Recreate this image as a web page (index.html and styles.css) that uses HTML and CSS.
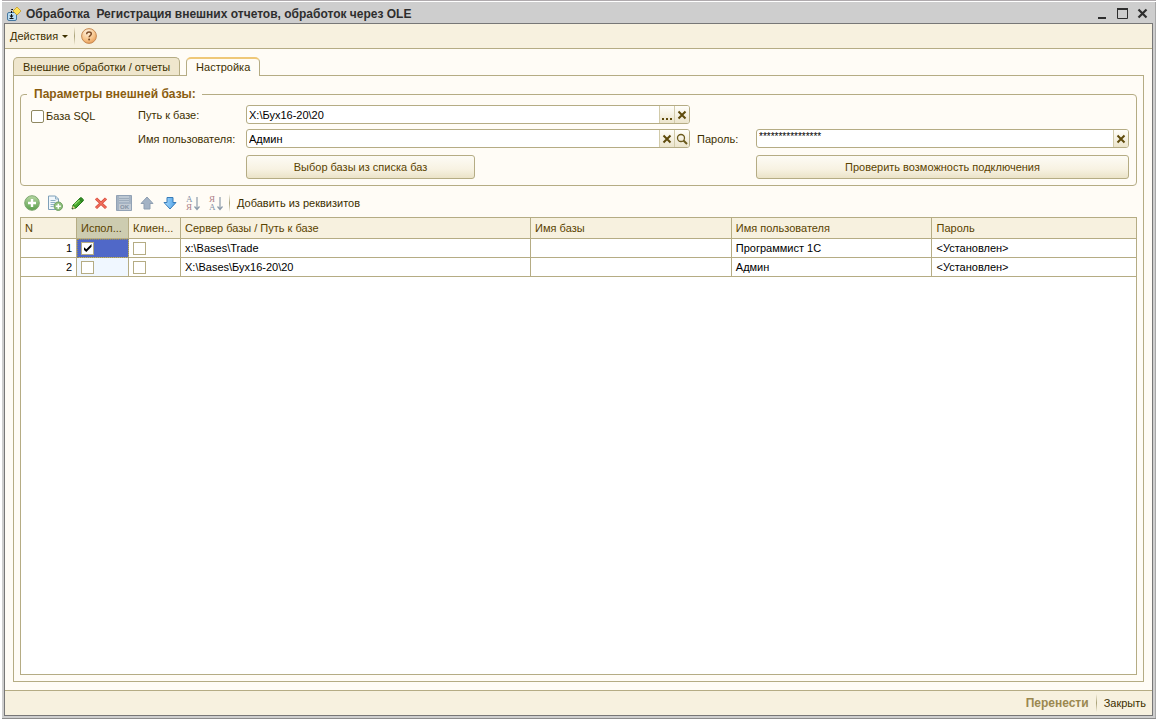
FILE: index.html
```html
<!DOCTYPE html>
<html lang="ru">
<head>
<meta charset="utf-8">
<title>Обработка Регистрация внешних отчетов, обработок через OLE</title>
<link rel="stylesheet" href="styles.css">
</head>
<body>
<div class="window">
  <header class="titlebar">
    <svg class="app-icon" width="16" height="16" viewBox="0 0 16 16" aria-hidden="true"><rect x="1.500" y="6.500" width="9" height="8" rx="1.500" fill="#b9dcf2" stroke="#46779f"/><path d="M11 1l4 4-4 4-4-4z" fill="#ffe35a" stroke="#c59a28" stroke-width=".8"/><path d="M7 3.500H5.500V11" fill="none" stroke="#111" stroke-dasharray="2 1"/><path d="M3.500 9.500h4L5.500 12z" fill="#111"/><path d="M3.500 12.500h4" stroke="#111"/></svg>
    <h1 class="title">Обработка&nbsp; Регистрация внешних отчетов, обработок через OLE</h1>
    <div class="window-buttons">
      <button class="win-btn" aria-label="Свернуть"><svg width="12" height="12" viewBox="0 0 12 12"><path d="M1 10h8" stroke="#2e2e2e" stroke-width="2"/></svg></button>
      <button class="win-btn" aria-label="Развернуть"><svg width="12" height="12" viewBox="0 0 12 12"><path d="M.5.500h10v10H.5z" fill="none" stroke="#2e2e2e"/><path d="M0 1h11" stroke="#2e2e2e" stroke-width="2"/></svg></button>
      <button class="win-btn" aria-label="Закрыть окно"><svg width="12" height="12" viewBox="0 0 12 12"><path d="M1.500 1.500l8 8M9.500 1.500l-8 8" stroke="#2e2e2e" stroke-width="2.200"/></svg></button>
    </div>
  </header>
  <main class="client">
    <nav class="menubar">
      <button class="menu-btn">Действия <span class="caret"></span></button>
      <span class="divider"></span>
      <button class="icon-btn" aria-label="Справка"><svg width="16" height="16" viewBox="0 0 16 16"><defs><radialGradient id="help" cx=".4" cy=".25" r=".8"><stop offset="0" stop-color="#fff3df"/><stop offset=".6" stop-color="#f7c68d"/><stop offset="1" stop-color="#e89a52"/></radialGradient></defs><circle cx="8" cy="8" r="7.400" fill="url(#help)" stroke="#c58a55"/><path d="M5.700 6.200c0-3.200 4.800-2.900 4.600-.2-.1 1.600-2.200 1.500-2.200 3.300" fill="none" stroke="#7b4a25" stroke-width="1.500"/><circle cx="8.100" cy="11.500" r="1" fill="#7b4a25"/></svg></button>
    </nav>
    <div class="content">
      <div class="tabs" role="tablist">
        <button class="tab" role="tab" aria-selected="false">Внешние обработки / отчеты</button>
        <button class="tab tab-active" role="tab" aria-selected="true">Настройка</button>
      </div>
      <section class="panel" role="tabpanel">
        <fieldset class="params">
          <legend>Параметры внешней базы:</legend>
          <label class="check-label"><input class="check check-round" type="checkbox">База SQL</label>
          <label for="path">Путь к базе:</label>
          <div class="field field-wide">
            <input id="path" class="field-input" type="text" value="X:\Бух16-20\20">
            <button class="field-btn" aria-label="Выбрать"><svg width="12" height="12" viewBox="0 0 12 12"><path d="M1 9h2v2H1zM5 9h2v2H5zM9 9h2v2H9z" fill="#5f4b0c"/></svg></button>
            <button class="field-btn" aria-label="Очистить"><svg width="10" height="10" viewBox="0 0 10 10"><path d="M1.500 1.500l7 7M8.500 1.500l-7 7" stroke="#5f4b0c" stroke-width="2"/></svg></button>
          </div>
          <label class="row2 col2" for="user">Имя пользователя:</label>
          <div class="field field-wide row2">
            <input id="user" class="field-input" type="text" value="Админ">
            <button class="field-btn" aria-label="Очистить"><svg width="10" height="10" viewBox="0 0 10 10"><path d="M1.500 1.500l7 7M8.500 1.500l-7 7" stroke="#5f4b0c" stroke-width="2"/></svg></button>
            <button class="field-btn" aria-label="Найти"><svg width="12" height="12" viewBox="0 0 12 12"><circle cx="5" cy="5" r="3.500" fill="none" stroke="#6b5a1c" stroke-width="1.300"/><path d="M7.500 7.500L11 11" stroke="#6b5a1c" stroke-width="2"/></svg></button>
          </div>
          <label class="row2 pass-label" for="pass">Пароль:</label>
          <div class="field field-pass row2">
            <input id="pass" class="field-input field-mask" type="text" value="****************">
            <button class="field-btn" aria-label="Очистить"><svg width="10" height="10" viewBox="0 0 10 10"><path d="M1.500 1.500l7 7M8.500 1.500l-7 7" stroke="#5f4b0c" stroke-width="2"/></svg></button>
          </div>
          <button class="push push-choose">Выбор базы из списка баз</button>
          <button class="push push-test">Проверить возможность подключения</button>
        </fieldset>

        <div class="toolbar">
          <button class="icon-btn" aria-label="Добавить"><svg width="16" height="16" viewBox="0 0 16 16"><defs><linearGradient id="green" x2="0" y2="1"><stop offset="0" stop-color="#b7d8a4"/><stop offset="1" stop-color="#5b9f4d"/></linearGradient></defs><circle cx="8" cy="8" r="7.300" fill="url(#green)" stroke="#7da770"/><path d="M8 4v8M4 8h8" stroke="#fff" stroke-width="2.400"/></svg></button>
          <button class="icon-btn" aria-label="Скопировать"><svg width="16" height="16" viewBox="0 0 16 16"><path d="M1.500 1h7l3 3v10.500h-10z" fill="#f1f7fb" stroke="#7fa0b8"/><path d="M8.500 1v3h3M3.500 5.500h5M3.500 7.500h5M3.500 9.500h4M3.500 11.500h3" fill="none" stroke="#8fb0c6"/><circle cx="11.300" cy="11.200" r="4.200" fill="#8fc07e" stroke="#6c9d5d"/><path d="M11.300 8.700v5M8.800 11.200h5" stroke="#fff" stroke-width="1.500"/></svg></button>
          <button class="icon-btn" aria-label="Изменить"><svg width="16" height="16" viewBox="0 0 16 16"><path d="M2 14l1-4L9 4l3 3L6 13z" fill="#45a52c" stroke="#267a1b"/><path d="M9 4l1.300-1.200c1-.8 3.700 1.700 3 3L12 7" fill="#338c25" stroke="#267a1b"/><path d="M4.500 9.500L9.500 5" stroke="#93d96f" stroke-width="1.300"/><path d="M2 14l.8-3.300 2.500 2.500z" fill="#f1d79b"/><path d="M2 14l.4-1.500 1.200 1.100z" fill="#222"/></svg></button>
          <button class="icon-btn" aria-label="Удалить"><svg width="16" height="16" viewBox="0 0 16 16"><path d="M3 3.500l10 9.500M13 3.500L3 13" stroke="#d6483a" stroke-width="3"/><path d="M3 3.500l10 9.500M13 3.500L3 13" stroke="#f0705d" stroke-width="1.500"/></svg></button>
          <button class="icon-btn" aria-label="Закончить редактирование"><svg width="16" height="16" viewBox="0 0 16 16"><path d="M.5.500h15v15H.5z" fill="#a5b3c3" stroke="#92a2b5"/><path d="M3 1h10v6H3z" fill="#bdc8d3"/><path d="M3 3.500h10M3 5.500h10" stroke="#9eacbb"/><path d="M3 9h12v6H3z" fill="#c2cad3"/><text x="4" y="14" class="svg-ok">OK</text></svg></button>
          <button class="icon-btn" aria-label="Переместить вверх"><svg width="16" height="16" viewBox="0 0 16 16"><path d="M8 2l6 6.500h-3V14H5V8.500H2z" fill="#a4b3c5" stroke="#8f9fb2"/></svg></button>
          <button class="icon-btn" aria-label="Переместить вниз"><svg width="16" height="16" viewBox="0 0 16 16"><defs><linearGradient id="blue"><stop offset="0" stop-color="#a9dcff"/><stop offset="1" stop-color="#4c9ee4"/></linearGradient></defs><path d="M8 14l6-6.500h-3V2.500H5v5H2z" fill="url(#blue)" stroke="#397cb8"/></svg></button>
          <button class="icon-btn" aria-label="Сортировать по возрастанию"><svg class="sort-icon" width="16" height="18" viewBox="0 0 16 18"><text x="1" y="8" class="svg-sort svg-blue">А</text><text x="1" y="16" class="svg-sort svg-red">Я</text><path d="M12 3v12M9.500 12.500L12 15.500l2.500-3" fill="none" stroke="#8d9bab" stroke-width="1.200"/></svg></button>
          <button class="icon-btn" aria-label="Сортировать по убыванию"><svg class="sort-icon" width="16" height="18" viewBox="0 0 16 18"><text x="1" y="8" class="svg-sort svg-red">Я</text><text x="1" y="16" class="svg-sort svg-blue">А</text><path d="M12 3v12M9.500 12.500L12 15.500l2.500-3" fill="none" stroke="#8d9bab" stroke-width="1.200"/></svg></button>
          <span class="divider"></span>
          <button class="menu-btn">Добавить из реквизитов</button>
        </div>

        <div class="grid-box">
          <table class="grid">
            <colgroup><col class="c-num"><col class="c-flag"><col class="c-flag"><col class="c-path"><col class="c-name"><col class="c-name"><col></colgroup>
            <thead>
              <tr><th>N</th><th class="th-current">Испол...</th><th>Клиен...</th><th>Сервер базы / Путь к базе</th><th>Имя базы</th><th>Имя пользователя</th><th>Пароль</th></tr>
            </thead>
            <tbody>
              <tr><td class="num">1</td><td class="cell-current"><input class="check" type="checkbox" checked aria-label="Использовать"></td><td><input class="check" type="checkbox" aria-label="Клиент-сервер"></td><td>x:\Bases\Trade</td><td></td><td>Программист 1С</td><td>&lt;Установлен&gt;</td></tr>
              <tr><td class="num">2</td><td class="cell-tint"><input class="check" type="checkbox" aria-label="Использовать"></td><td><input class="check" type="checkbox" aria-label="Клиент-сервер"></td><td>X:\Bases\Бух16-20\20</td><td></td><td>Админ</td><td>&lt;Установлен&gt;</td></tr>
            </tbody>
          </table>
        </div>
      </section>
    </div>
    <footer class="footer">
      <button class="menu-btn primary">Перенести</button>
      <span class="divider"></span>
      <button class="menu-btn">Закрыть</button>
    </footer>
  </main>
</div>
</body>
</html>
```
FILE: styles.css
```css
* { box-sizing: border-box; }
:root { --line: #b5ac84; --text: #3d3000; --head: #f7f1df; --page: #fffcf6; }
body { margin: 0; font: 11px/14px "Liberation Sans", Arial, sans-serif; color: var(--text); background: #fff; }
button, input { font: inherit; color: inherit; }
button { padding: 0; border: 0; background: none; white-space: nowrap; }
svg { display: block; }

.window { display: flex; flex-direction: column; height: 100vh; margin-left: 2px; padding: 0 3px 3px 2px; background: #cecece; border-top: 1px solid #b0abae; box-shadow: inset 0 1px #fff, inset 0 -1px #8c8c8c, inset -1px 0 #a8a8a8; }
.titlebar { display: flex; align-items: center; flex: none; height: 22px; padding: 3px 4px 0 2px; }
.app-icon { margin-right: 4px; }
.title { margin: 0; font-size: 12px; line-height: 16px; color: #2e2e2e; white-space: nowrap; }
.window-buttons { display: flex; gap: 8px; margin-left: auto; }

.client { display: flex; flex-direction: column; flex: 1; min-height: 0; border: 1px solid #777; background: var(--page); }
.menubar { display: flex; align-items: center; flex: none; height: 25px; padding: 0 5px; background: var(--head); border-bottom: 1px solid var(--line); }
.caret { display: inline-block; margin-left: 1px; vertical-align: 2px; border: 3px solid transparent; border-top-color: currentColor; border-bottom: 0; }
.divider { width: 1px; height: 18px; margin: 0 6px; background: linear-gradient(transparent, #a9a177, transparent); }
.icon-btn { flex: none; }

.content { display: flex; flex-direction: column; flex: 1; min-height: 0; padding: 8px; }
.tabs { display: flex; align-items: flex-end; flex: none; gap: 6px; }
.tab { height: 18px; padding: 0 9px; border: 1px solid var(--line); border-bottom: 0; border-radius: 5px 5px 0 0; background: #efe6cd; }
.tab-active { position: relative; height: 19px; margin-bottom: -1px; padding-bottom: 2px; background: var(--page); border-top: 2px solid #efc878; }
.panel { display: flex; flex-direction: column; flex: 1; min-height: 0; padding: 11px 6px 6px; border: 1px solid var(--line); }

.params { display: grid; grid-template-columns: 107px 108px 229fr 215fr 66px 373fr; grid-template-rows: 19px 19px 26px; row-gap: 5px; flex: none; align-items: center; min-width: 0; margin: 0; padding: 4px 7px 6px 10px; border: 1px solid var(--line); border-radius: 4px; }
.params legend { margin: 0 0 0 -4px; padding: 0 6px 0 7px; font-size: 12px; line-height: 14px; font-weight: bold; color: #8a5d10; }
.check-label { display: flex; align-items: center; gap: 2px; padding-top: 3px; }
.col2 { grid-column: 2; }
.row2 { grid-row: 2; }
.pass-label { grid-column: 5; padding-left: 7px; }
.field { display: flex; height: 19px; overflow: hidden; border: 1px solid var(--line); border-radius: 3px; background: #fff; }
.field-wide { grid-column: 3 / 5; }
.field-pass { grid-column: 6; }
.field-input { flex: 1; min-width: 0; padding: 0 2px; border: 0; outline: 0; background: none; color: #000; }
.field-mask { padding-bottom: 3px; font-size: 10px; }
.field-btn { display: grid; place-items: center; flex: none; width: 15px; border-left: 1px solid #d2cbaa; background: linear-gradient(#fffefa, #ece5cc); }
.push { grid-row: 3; align-self: end; height: 24px; border: 1px solid var(--line); border-radius: 3px; background: linear-gradient(#fdfbf5, #f7f2e2 60%, #ebe3c8); color: #5a4300; }
.push-choose { grid-column: 3; }
.push-test { grid-column: 6; }

.toolbar { display: flex; align-items: center; flex: none; gap: 7px; height: 31px; padding: 3px 0 0 4px; }
.toolbar .divider { margin: 0 0 0 -2px; }
.svg-ok { font: bold 6px "Liberation Sans", sans-serif; fill: #8492a4; }
.svg-sort { font: 9px "Liberation Serif", serif; }
.sort-icon { overflow: visible; }
.svg-blue { fill: #7f8fa6; }
.svg-red { fill: #ac7f86; }

.grid-box { flex: 1; min-height: 0; overflow: hidden; border: 1px solid var(--line); background: #fff; }
.grid { width: 100%; table-layout: fixed; border-collapse: separate; border-spacing: 0; color: #000; }
.c-num { width: 56px; }
.c-flag { width: 52px; }
.c-path { width: 31.4%; }
.c-name { width: 18%; }
.grid th, .grid td { padding: 0 4px; border-right: 1px solid var(--line); border-bottom: 1px solid var(--line); overflow: hidden; white-space: nowrap; text-align: left; }
.grid th:last-child, .grid td:last-child { border-right: 0; }
.grid th { height: 21px; font-weight: normal; background: var(--head); color: #5a4300; }
.grid td { height: 19px; }
.grid .th-current { background: #cdccb0; }
.grid .num { text-align: right; }
.grid .cell-current { background: #5068c8; outline: 1px dotted #9a8f58; outline-offset: -1px; }
.grid .cell-tint { background: #f0f7ff; }

.check { appearance: none; display: grid; place-items: center; width: 13px; height: 13px; margin: 0; border: 1px solid var(--line); background: #fff; }
.check-round { border-radius: 2px; border-color: #8f8861; }
.check:checked::before { content: ""; width: 8px; height: 8px; background: #000; clip-path: polygon(0 35%, 35% 65%, 100% 0, 100% 35%, 35% 100%, 0 70%); }

.footer { display: flex; align-items: center; justify-content: flex-end; flex: none; height: 25px; padding: 0 6px; background: var(--head); border-top: 1px solid var(--line); }
.footer .divider { margin: 0 7px; }
.primary { font-size: 12px; font-weight: bold; color: #9b8850; }
```
